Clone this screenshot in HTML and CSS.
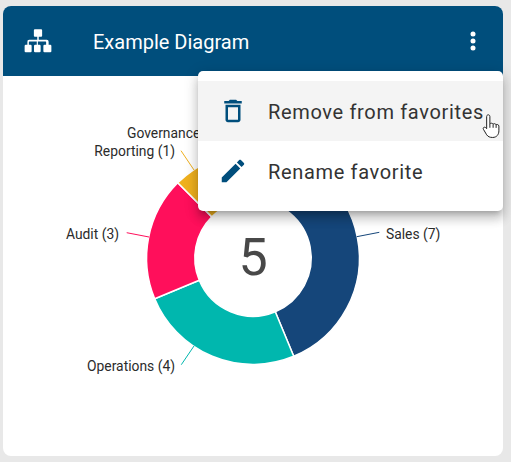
FILE: index.html
```html
<!DOCTYPE html>
<html lang="en">
<head>
<meta charset="utf-8">
<title>Example Diagram</title>
<link rel="stylesheet" href="styles.css">
</head>
<body>
<main class="card">
  <header class="card-header">
    <svg class="header-icon" viewBox="0 0 24 24"><path d="M9.500 2.500h5a.8.8 0 0 1 .8.8v4.400a.8.8 0 0 1-.8.8h-1.900v2.500H19a1.500 1.500 0 0 1 1.500 1.500V15h1.300a.9.9 0 0 1 .9.9v4.200a.9.9 0 0 1-.9.9h-4.600a.9.9 0 0 1-.9-.9v-4.200a.9.9 0 0 1 .9-.9h1.300v-2.300a.3.3 0 0 0-.3-.3h-6.300V15h1.300a.9.9 0 0 1 .9.9v4.200a.9.9 0 0 1-.9.9H9.700a.9.9 0 0 1-.9-.9v-4.200a.9.9 0 0 1 .9-.9h1.300v-2.600H5a.3.3 0 0 0-.3.3V15H6a.9.9 0 0 1 .9.9v4.200a.9.9 0 0 1-.9.9H2.200a.9.9 0 0 1-.9-.9v-4.200a.9.9 0 0 1 .9-.9h1.300v-2.300A1.500 1.500 0 0 1 5 11h6.400V8.500H9.500a.8.8 0 0 1-.8-.8V3.300a.8.8 0 0 1 .8-.8z"/></svg>
    <h1 class="card-title">Example Diagram</h1>
    <svg class="kebab" viewBox="0 0 24 24"><circle cx="12" cy="3.600" r="3"/><circle cx="12" cy="12" r="3"/><circle cx="12" cy="20.400" r="3"/></svg>
  </header>
  <div class="card-body">
    <svg class="chart" viewBox="0 0 500 380" width="500" height="380">
      <g class="slices">
        <path class="sales" d="M250 75.600A106.400 106.400 0 0 1 290.720 280.300L272.270 235.770A58.200 58.200 0 0 0 250 123.800Z"/>
        <path class="operations" d="M290.720 280.300A106.400 106.400 0 0 1 151.700 222.720L196.230 204.270A58.200 58.200 0 0 0 272.270 235.770Z"/>
        <path class="audit" d="M151.700 222.720A106.400 106.400 0 0 1 174.760 106.760L208.850 140.850A58.200 58.200 0 0 0 196.230 204.270Z"/>
        <path class="reporting" d="M174.760 106.760A106.400 106.400 0 0 1 209.280 83.700L227.730 128.230A58.200 58.200 0 0 0 208.850 140.850Z"/>
        <path class="governance" d="M209.280 83.700A106.400 106.400 0 0 1 250 75.600V123.800A58.200 58.200 0 0 0 227.730 128.230Z"/>
      </g>
      <g class="leaders">
        <line class="l-sales" x1="353.700" y1="160.700" x2="376.300" y2="156.300"/>
        <line class="l-operations" x1="191" y1="270" x2="178.300" y2="288.700"/>
        <line class="l-audit" x1="146" y1="161" x2="123.700" y2="156.700"/>
        <line class="l-reporting" x1="178" y1="74.700" x2="191" y2="94"/>
      </g>
      <g class="labels">
        <text x="383" y="163">Sales (7)</text>
        <text x="172" y="295" text-anchor="end">Operations (4)</text>
        <text x="116" y="163" text-anchor="end">Audit (3)</text>
        <text x="172" y="80" text-anchor="end">Reporting (1)</text>
        <text x="124" y="62">Governance (1)</text>
      </g>
      <text class="total" x="250" y="199" text-anchor="middle">5</text>
    </svg>
  </div>
  <nav class="menu">
    <div class="menu-item is-hover">
      <svg class="menu-icon" viewBox="0 0 24 24"><path d="M6 19c0 1.100.9 2 2 2h8c1.100 0 2-.9 2-2V7H6v12zM8 9h8v10H8V9zm7.500-5l-1-1h-5l-1 1H5v2h14V4h-3.500z"/></svg>
      <span class="menu-label">Remove from favorites</span>
    </div>
    <div class="menu-item">
      <svg class="menu-icon" viewBox="0 0 24 24"><path d="M20.710 7.040c.39-.39.39-1.040 0-1.410l-2.340-2.340c-.37-.39-1.020-.39-1.410 0l-1.840 1.830 3.750 3.750M3 17.250V21h3.750L17.810 9.930l-3.750-3.750L3 17.250z"/></svg>
      <span class="menu-label">Rename favorite</span>
    </div>
    <svg class="cursor" viewBox="0 0 18 24"><path d="M5.600 1.600c.9 0 1.500.7 1.500 1.600v6.600c.3-.8 2.600-.9 2.900.3.4-.8 2.400-.7 2.700.5.6-.6 2.400-.3 2.500 1.200v4.200c0 3.200-1.900 6-5.600 6-2.700 0-4.100-.7-5.400-2.400L1.300 14.700c-.8-1.200.6-2.600 1.900-1.600l1 1V3.200c0-.9.6-1.600 1.400-1.600z"/><path class="cursor-lines" d="M7.100 9.800v3.500M10 10.100v3.200M12.700 10.600v2.800"/></svg>
  </nav>
</main>
</body>
</html>
```
FILE: styles.css
```css
* { box-sizing: border-box; }
html, body { margin: 0; height: 100%; }
body {
  background: #e8e8e8;
  padding: 6px 8px 6px 3px;
  font-family: Roboto, "Liberation Sans", sans-serif;
  overflow: hidden;
}
.card {
  position: relative;
  height: 450px;
  background: #fff;
  border-radius: 8px;
  display: flex;
  flex-direction: column;
}
.card-header {
  flex: none;
  height: 70px;
  background: #004e7c;
  border-radius: 8px 8px 0 0;
  display: flex;
  align-items: center;
  padding: 0 20px;
  color: #fff;
}
.header-icon { width: 30px; height: 30px; fill: #fff; flex: none; }
.card-title {
  margin: 1px 0 0 40px;
  flex: 1;
  font-size: 20px;
  font-weight: 400;
  line-height: 24px;
}
.kebab { width: 20px; height: 20px; fill: #fff; flex: none; }
.card-body { flex: 1; min-height: 0; }
.chart { display: block; }
.slices path { stroke: #fff; stroke-width: 1.5; stroke-linejoin: round; }
.sales { fill: #15467a; }
.operations { fill: #00b7ae; }
.audit { fill: #ff0f5b; }
.reporting { fill: #efb01e; }
.governance { fill: #efb01e; }
.leaders line { stroke-width: 1; }
.l-sales { stroke: #15467a; }
.l-operations { stroke: #00b7ae; }
.l-audit { stroke: #ff0f5b; }
.l-reporting { stroke: #efb01e; }
.labels text { font-size: 13.85px; fill: #2b2b2b; font-family: Roboto, sans-serif; }
.total { font-size: 52px; fill: #484848; font-family: Roboto, sans-serif; }
.menu {
  position: absolute;
  top: 65px;
  left: 195px;
  width: 305px;
  height: 140px;
  padding: 10px 0;
  background: #fff;
  border-radius: 5px;
  box-shadow: 0 5px 5px -3px rgba(0,0,0,.2), 0 8px 10px 1px rgba(0,0,0,.14), 0 3px 14px 2px rgba(0,0,0,.12);
}
.menu-item {
  height: 60px;
  display: flex;
  align-items: center;
  padding-left: 20px;
  color: #333;
}
.menu-item.is-hover { background: #f4f4f4; }
.menu-icon { width: 30px; height: 30px; fill: #004e7c; flex: none; }
.menu-label {
  margin: 2px 0 0 20px;
  font-size: 20px;
  letter-spacing: .66px;
}
.cursor {
  position: absolute;
  top: 41.5px;
  left: 283.6px;
  width: 20px;
  height: 26.7px;
  fill: #fff;
  stroke: #222;
  stroke-width: .9;
}
.cursor-lines { fill: none; }
```
